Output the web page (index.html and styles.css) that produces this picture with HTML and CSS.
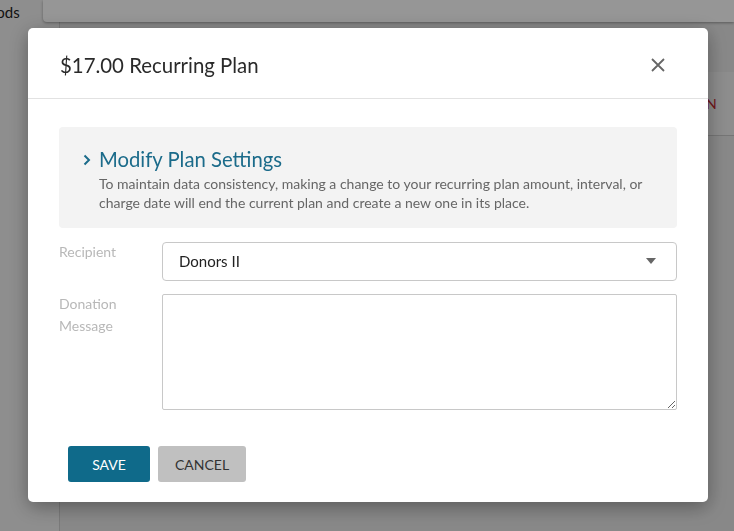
FILE: index.html
```html
<!DOCTYPE html>
<html lang="en">
<head>
<meta charset="utf-8">
<title>Recurring Plan</title>
<link rel="stylesheet" href="styles.css">
</head>
<body>
<div class="page">
  <aside class="sidebar"><span class="side-item">Methods</span></aside>
  <main class="main">
    <div class="topcard"></div>
    <div class="band"><span class="band-action">CANCEL PLAN</span></div>
  </main>
</div>
<div class="overlay"></div>
<div class="modal" role="dialog">
  <header class="modal-header">
    <h1 class="modal-title">$17.00 Recurring Plan</h1>
    <button class="close" aria-label="Close">
      <svg width="16" height="16" viewBox="0 0 16 16"><path d="M2 2 L14 14 M14 2 L2 14" stroke="#666" stroke-width="1.8" fill="none"/></svg>
    </button>
  </header>
  <div class="modal-body">
    <section class="settings">
      <div class="settings-head">
        <svg class="chev" width="8" height="12" viewBox="0 0 8 12"><path d="M1.5 1.5 L6 6 L1.5 10.5" stroke="#1b6b8a" stroke-width="2" fill="none"/></svg>
        <span class="settings-title">Modify Plan Settings</span>
      </div>
      <p class="settings-text">To maintain data consistency, making a change to your recurring plan amount, interval, or charge date will end the current plan and create a new one in its place.</p>
    </section>
    <div class="row">
      <label class="label">Recipient</label>
      <div class="select">
        <span>Donors II</span>
        <svg width="10" height="6" viewBox="0 0 10 6"><path d="M0 0 H10 L5 6 Z" fill="#666"/></svg>
      </div>
    </div>
    <div class="row">
      <label class="label">Donation<br>Message</label>
      <textarea class="textarea"></textarea>
    </div>
    <div class="actions">
      <button class="btn btn-save">SAVE</button>
      <button class="btn btn-cancel">CANCEL</button>
    </div>
  </div>
</div>
</body>
</html>
```

FILE: styles.css
```css
* { box-sizing: border-box; }
html, body { margin: 0; padding: 0; }
body {
  width: 734px;
  height: 531px;
  overflow: hidden;
  font-family: Lato, "Open Sans", "Liberation Sans", sans-serif;
  background: #e8e8e8;
}
.page {
  display: flex;
  height: 531px;
}
.sidebar {
  width: 60px;
  flex: none;
  background: #f2f2f2;
  border-right: 1px solid #d0d0d0;
  overflow: hidden;
}
.side-item {
  display: block;
  margin-left: -39px;
  margin-top: 3px;
  font-size: 15px;
  color: #222;
  white-space: nowrap;
}
.main {
  flex: 1;
  min-width: 0;
  display: flex;
  flex-direction: column;
}
.topcard {
  height: 22px;
  margin-left: -17px;
  background: #fff;
  border-radius: 0 0 0 4px;
  box-shadow: 0 1px 3px rgba(0,0,0,0.35);
}
.band {
  margin-top: 50px;
  height: 64px;
  background: #f0f0f0;
  border-bottom: 1px solid #c8c8c8;
  display: flex;
  align-items: center;
  justify-content: flex-end;
  padding-right: 17px;
}
.band-action {
  color: #c0262d;
  font-size: 14px;
  letter-spacing: 0.3px;
}
.overlay {
  position: fixed;
  inset: 0;
  background: rgba(0,0,0,0.41);
}
.modal {
  position: fixed;
  left: 28px;
  top: 28px;
  width: 680px;
  height: 474px;
  background: #fff;
  border-radius: 5px;
  box-shadow: 0 5px 20px rgba(0,0,0,0.35);
}
.modal-header {
  height: 71px;
  border-bottom: 1px solid #e2e2e2;
  display: flex;
  align-items: center;
  justify-content: space-between;
  padding: 4px 42px 0 32px;
}
.modal-title {
  margin: 0;
  font-size: 20.4px;
  font-weight: 400;
  color: #2a2a2a;
}
.close {
  border: 0;
  background: none;
  padding: 0;
  width: 16px;
  height: 16px;
  display: flex;
}
.modal-body {
  padding: 28px 31px 0 31px;
}
.settings {
  background: #f3f3f3;
  border-radius: 4px;
  padding: 20px 18px 16px 24px;
  height: 101px;
}
.settings-head {
  display: flex;
  align-items: center;
  gap: 8px;
}
.chev { margin-top: 1px; }
.settings-title {
  font-size: 20.3px;
  color: #1b6b8a;
}
.settings-text {
  margin: 3px 0 0 16px;
  font-size: 14px;
  line-height: 19px;
  color: #666;
}
.row {
  display: flex;
  margin-top: 14px;
}
.label {
  width: 103px;
  flex: none;
  font-size: 14px;
  line-height: 22px;
  color: #b8b8b8;
  margin-top: -1px;
}
.select {
  flex: 1;
  height: 39px;
  border: 1px solid #c8c8c8;
  border-radius: 4px;
  display: flex;
  align-items: center;
  justify-content: space-between;
  padding: 0 20px 2px 16px;
  font-size: 15px;
  color: #222;
}
.row + .row { margin-top: 13px; }
.textarea {
  flex: 1;
  height: 116px;
  border: 1px solid #c8c8c8;
  border-radius: 2px;
  resize: vertical;
  font-family: inherit;
}
.actions {
  display: flex;
  gap: 8px;
  margin: 36px 0 0 9px;
}
.btn {
  height: 36px;
  border: 0;
  border-radius: 3px;
  font-family: inherit;
  font-size: 14px;
}
.btn-save {
  width: 82px;
  background: #0f6a8a;
  color: #fff;
}
.btn-cancel {
  width: 88px;
  background: #c0c0c0;
  color: #333;
}
```
